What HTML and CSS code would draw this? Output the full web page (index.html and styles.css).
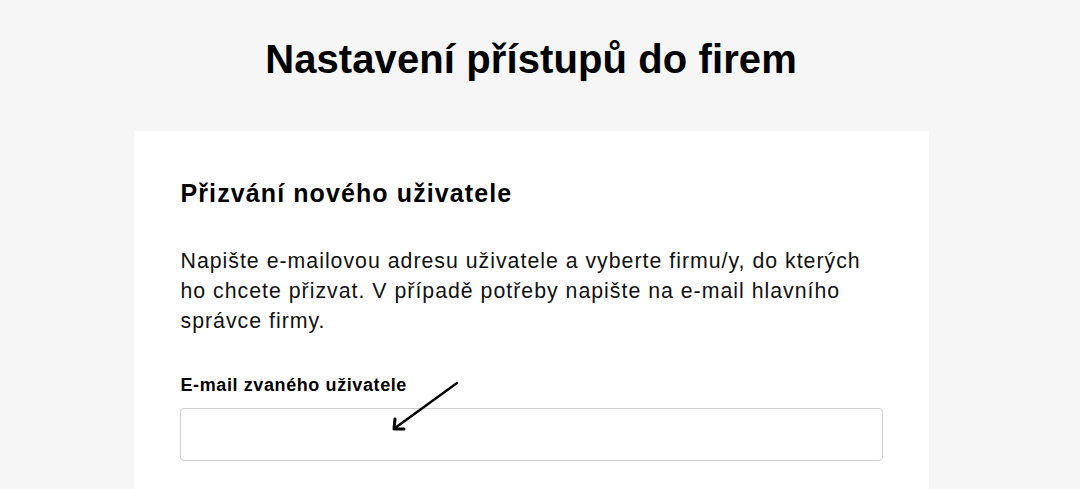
FILE: index.html
```html
<!DOCTYPE html>
<html lang="cs">
<head>
<meta charset="utf-8">
<title>Nastavení přístupů do firem</title>
<link rel="stylesheet" href="styles.css">
</head>
<body>
<main class="page">
  <h1 class="page-title">Nastavení přístupů do firem</h1>
  <section class="card">
    <h2 class="card-title">Přizvání nového uživatele</h2>
    <p class="card-text">Napište e-mailovou adresu uživatele a vyberte firmu/y, do kterých ho chcete přizvat. V případě potřeby napište na e-mail hlavního správce firmy.</p>
    <div class="field">
      <label class="field-label" for="email">E-mail zvaného uživatele</label>
      <input class="field-input" id="email" type="email">
      <svg class="annot-arrow" width="80" height="60" viewBox="0 0 80 60" aria-hidden="true">
        <line x1="74" y1="4" x2="12" y2="49" stroke="#000" stroke-width="2.4" stroke-linecap="round"/>
        <path d="M12 40 L11 50 L21 50" fill="none" stroke="#000" stroke-width="3" stroke-linecap="round" stroke-linejoin="round"/>
      </svg>
    </div>
  </section>
</main>
</body>
</html>
```
FILE: styles.css
```css
* { box-sizing: border-box; }
html, body {
  margin: 0;
  padding: 0;
  background: #f6f6f6;
  font-family: "Liberation Sans", Arial, sans-serif;
  color: #111;
}
.page {
  display: flex;
  flex-direction: column;
  align-items: center;
  padding-top: 34px;
  padding-right: 18px;
}
.page-title {
  margin: 0;
  font-size: 40px;
  font-weight: 700;
  line-height: 50px;
  letter-spacing: 0.1px;
  color: #000;
}
.card {
  margin-top: 47px;
  width: 795px;
  background: #fff;
  padding: 46px 46px 40px 47px;
}
.card-title {
  margin: 0;
  font-size: 25px;
  font-weight: 700;
  line-height: 32px;
  letter-spacing: 1.1px;
  color: #000;
}
.card-text {
  margin: 37px 0 0 0;
  font-size: 21.3px;
  line-height: 30px;
  font-weight: 400;
  letter-spacing: 1px;
  max-width: 702px;
}
.field {
  position: relative;
  margin-top: 38px;
  width: 703px;
  margin-left: -1px;
}
.field-label {
  display: block;
  font-size: 18px;
  font-weight: 700;
  line-height: 22px;
  letter-spacing: 0.6px;
  margin-left: 1px;
  margin-bottom: 12px;
  color: #000;
}
.field-input {
  display: block;
  width: 703px;
  height: 53px;
  border: 1px solid #cfcfcf;
  border-radius: 4px;
  background: #fff;
  outline: none;
  font: inherit;
}
.annot-arrow {
  position: absolute;
  left: 203px;
  top: 5px;
}
```
